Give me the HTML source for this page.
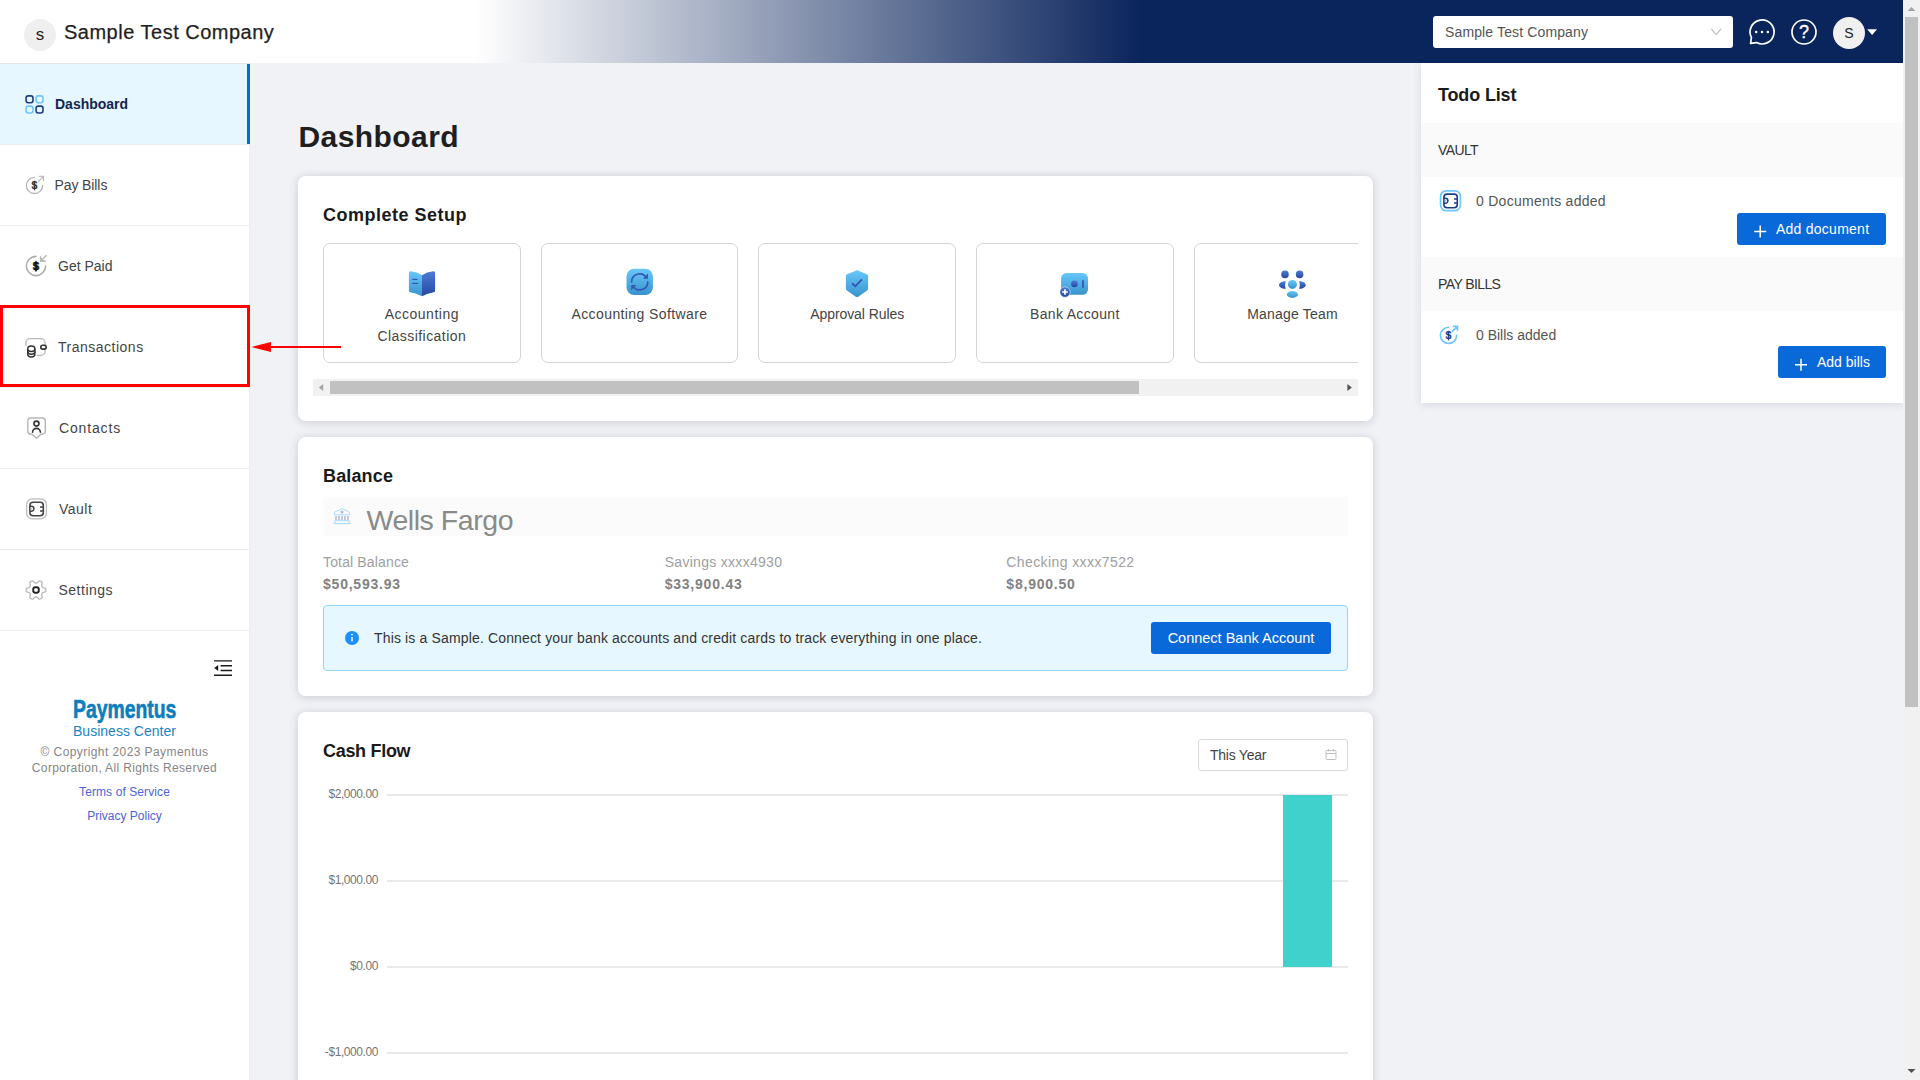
<!DOCTYPE html>
<html lang="en">
<head>
<meta charset="utf-8">
<title>Dashboard - Paymentus Business Center</title>
<style>
*{box-sizing:border-box;margin:0;padding:0}
html,body{width:1920px;height:1080px;overflow:hidden}
body{font-family:"Liberation Sans",sans-serif;font-size:14px;color:#333;background:#f1f2f6;position:relative}
.abs{position:absolute}
svg text{font-family:"Liberation Sans",sans-serif}
#ov{position:absolute;left:0;top:0;pointer-events:none}
/* header */
#hdr{position:absolute;left:0;top:0;width:1903px;height:63px;background:linear-gradient(90deg,#fff 0,#fff 25%,#0a245c 60%,#0a245c 100%)}
#hdr .av{position:absolute;left:24px;top:19px;width:32px;height:32px;border-radius:50%;background:#efefef;text-align:center;line-height:31px;font-size:17px;color:#222}
#hdr .co{position:absolute;left:64px;top:20px;-webkit-text-stroke:.25px #1f1f1f;font-size:20px;line-height:24px;color:#1f1f1f;letter-spacing:.5px;white-space:nowrap}
#sel{position:absolute;left:1433px;top:16px;width:300px;height:32px;background:#fff;border-radius:3px;font-size:14px;line-height:32px;padding-left:12px;color:#555;letter-spacing:.13px}
#av2{position:absolute;left:1833px;top:17px;width:32px;height:32px;border-radius:50%;background:#f0f0f0;text-align:center;line-height:32px;font-size:14px;color:#222}
/* sidebar */
#side{position:absolute;left:0;top:63px;width:250px;height:1017px;background:#fff;border-top:1px solid #e3e5ea;border-right:1px solid #eceef2}
.mi{position:absolute;left:0;width:249px;height:81px;border-bottom:1px solid #ececec}
.mi span{position:absolute;top:31px;line-height:18px;font-size:14px;color:#444;white-space:nowrap}
.mi.act{background:linear-gradient(#e6f7ff,#e6f7ff) 0 0/247px 80px no-repeat,linear-gradient(#0a69d9,#0a69d9) 247px 0/3px 80px no-repeat;width:250px}
.mi.act span{font-weight:700;color:#14254f}
.ft{position:absolute;left:0;width:249px;text-align:center;white-space:nowrap}
/* cards */
.card{position:absolute;left:298px;width:1075px;background:#fff;border-radius:8px;box-shadow:0 1px 10px rgba(20,30,60,.19)}
.h4{position:absolute;font-size:18px;font-weight:700;color:#1a1a1a;white-space:nowrap;line-height:22px;letter-spacing:.5px}
.tile{position:absolute;top:0;width:197.67px;height:120px;border:1px solid #d4d4d4;border-radius:7px;background:#fff;text-align:center;color:#444;font-size:14px;line-height:22px}
.tile .tx{position:absolute;left:0;right:0;top:59px;letter-spacing:.2px}
.btn{position:absolute;height:32px;background:#0a69d9;border-radius:3px;color:#fff;font-size:14px;line-height:32px;white-space:nowrap}
.lb{position:absolute;font-size:14px;line-height:22px;color:#a0a0a0;white-space:nowrap}
.vl{position:absolute;font-size:14px;line-height:22px;color:#828282;font-weight:700;white-space:nowrap;letter-spacing:.78px}
.yl{position:absolute;left:0;width:378px;text-align:right;font-size:12px;line-height:14px;color:#757575;letter-spacing:-.42px}
.gl{position:absolute;left:387px;width:961px;height:2px;background:#e9e9e9}
.sh{position:absolute;left:0;width:482px;height:54px;background:#fafafa;font-size:14px;line-height:54px;padding-left:17px;color:#333;letter-spacing:-.6px}
</style>
</head>
<body>

<!-- HEADER -->
<div id="hdr">
  <div class="av">s</div>
  <div class="co">Sample Test Company</div>
  <div id="sel">Sample Test Company</div>
  <div id="av2">S</div>
</div>

<!-- SIDEBAR -->
<div id="side">
  <div class="mi act" style="top:0"><span style="left:55px">Dashboard</span></div>
  <div class="mi" style="top:81px"><span style="left:54.5px;letter-spacing:-.1px">Pay Bills</span></div>
  <div class="mi" style="top:162px"><span style="left:58px">Get Paid</span></div>
  <div class="mi" style="top:243px"><span style="left:58px;letter-spacing:.5px">Transactions</span></div>
  <div class="mi" style="top:324px"><span style="left:59px;letter-spacing:.85px">Contacts</span></div>
  <div class="mi" style="top:405px"><span style="left:59px;letter-spacing:.5px">Vault</span></div>
  <div class="mi" style="top:486px"><span style="left:58.5px;letter-spacing:.5px">Settings</span></div>

  <div class="ft" style="top:630px;font-size:25px;line-height:30px;font-weight:700;color:#0d7ebd"><span style="-webkit-text-stroke:.6px #0d7ebd;display:inline-block;transform:scaleX(.775);transform-origin:50% 50%">Paymentus</span></div>
  <div class="ft" style="top:658px;font-size:14px;line-height:18px;color:#1a84c4;letter-spacing:.02px">Business Center</div>
  <div class="ft" style="top:680px;font-size:12px;line-height:16px;color:#858585;letter-spacing:.42px">© Copyright 2023 Paymentus</div>
  <div class="ft" style="top:696px;font-size:12px;line-height:16px;color:#858585;letter-spacing:.35px">Corporation, All Rights Reserved</div>
  <div class="ft" style="top:720px;font-size:12px;line-height:16px;color:#4b64d7;letter-spacing:.09px">Terms of Service</div>
  <div class="ft" style="top:744px;font-size:12px;line-height:16px;color:#4b64d7;letter-spacing:0">Privacy Policy</div>
</div>

<!-- MAIN -->
<div id="title" class="abs" style="left:298.5px;top:119px;font-size:30px;font-weight:700;line-height:36px;color:#1f1f1f;letter-spacing:.42px">Dashboard</div>

<div class="card" id="c1" style="top:176px;height:245px">
  <div class="h4" style="left:25px;top:28px">Complete Setup</div>
  <div class="abs" style="left:15px;top:67px;width:1045px;height:136px;overflow:hidden">
    <div class="tile" style="left:10px"><div class="tx"><span style="letter-spacing:.5px">Accounting</span><br><span style="letter-spacing:.45px">Classification</span></div></div>
    <div class="tile" style="left:227.67px"><div class="tx" style="letter-spacing:.4px">Accounting Software</div></div>
    <div class="tile" style="left:445.33px"><div class="tx" style="letter-spacing:-.08px">Approval Rules</div></div>
    <div class="tile" style="left:663px"><div class="tx" style="letter-spacing:.34px">Bank Account</div></div>
    <div class="tile" style="left:880.67px"><div class="tx">Manage Team</div></div>
  </div>
  <div class="abs" style="left:15px;top:203px;width:1045px;height:17px;background:#f1f1f1"></div>
  <div class="abs" style="left:32px;top:205px;width:809px;height:13px;background:#c1c1c1"></div>
</div>

<div class="card" id="c2" style="top:437px;height:259px">
  <div class="h4" style="left:25px;top:28px;letter-spacing:.15px">Balance</div>
  <div class="abs" style="left:25px;top:60px;width:1025px;height:39px;background:#fbfbfb"></div>
  <div class="abs" style="left:68.5px;top:65px;font-size:28.5px;line-height:36px;color:#8a8a8a;white-space:nowrap;letter-spacing:-.45px">Wells Fargo</div>
  <div class="lb" style="left:25px;top:114px;letter-spacing:.15px">Total Balance</div>
  <div class="vl" style="left:25px;top:136px">$50,593.93</div>
  <div class="lb" style="left:366.67px;top:114px;letter-spacing:.3px">Savings xxxx4930</div>
  <div class="vl" style="left:366.67px;top:136px">$33,900.43</div>
  <div class="lb" style="left:708.33px;top:114px;letter-spacing:.4px">Checking xxxx7522</div>
  <div class="vl" style="left:708.33px;top:136px">$8,900.50</div>
  <div class="abs" style="left:25px;top:168px;width:1025px;height:66px;background:#e6f7ff;border:1px solid #91d5ff;border-radius:4px">
    <div class="abs" style="left:50px;top:21px;line-height:22px;font-size:14px;color:#333;white-space:nowrap;letter-spacing:.15px">This is a Sample. Connect your bank accounts and credit cards to track everything in one place.</div>
    <div class="btn" style="left:827px;top:16px;width:180px;text-align:center;font-size:14.5px">Connect Bank Account</div>
  </div>
</div>

<div class="card" id="c3" style="top:712px;height:400px">
  <div class="h4" style="left:25px;top:28px;letter-spacing:-.3px">Cash Flow</div>
  <div class="abs" style="left:900px;top:27px;width:150px;height:32px;border:1px solid #d9d9d9;border-radius:3px;line-height:30px;padding-left:11px;font-size:14px;color:#444;letter-spacing:-.25px">This Year</div>
</div>
<!-- chart (page coords) -->
<div class="yl" style="top:787px">$2,000.00</div>
<div class="yl" style="top:873px">$1,000.00</div>
<div class="yl" style="top:959px">$0.00</div>
<div class="yl" style="top:1045px">-$1,000.00</div>
<div class="gl" style="top:794px"></div>
<div class="gl" style="top:880px"></div>
<div class="gl" style="top:966px"></div>
<div class="gl" style="top:1052px"></div>
<div class="abs" style="left:1283.3px;top:795px;width:48.4px;height:172px;background:#40d1cd"></div>

<!-- TODO -->
<div id="todo" class="abs" style="left:1421px;top:63px;width:482px;height:340px;background:#fff;box-shadow:0 2px 8px rgba(40,50,90,.12)">
  <div class="h4" style="left:17px;top:21px;letter-spacing:-.15px">Todo List</div>
  <div class="sh" style="top:60px">VAULT</div>
  <div class="abs" style="left:55px;top:127px;line-height:22px;color:#555;white-space:nowrap;letter-spacing:.27px">0 Documents added</div>
  <div class="btn" style="left:316px;top:150px;width:149px;padding-left:39px;letter-spacing:.25px">Add document</div>
  <div class="sh" style="top:194px">PAY BILLS</div>
  <div class="abs" style="left:55px;top:261px;line-height:22px;color:#555;white-space:nowrap">0 Bills added</div>
  <div class="btn" style="left:357px;top:283px;width:108px;padding-left:39px">Add bills</div>
</div>

<!-- red highlight -->
<div class="abs" style="left:0;top:305px;width:250px;height:82px;border:3px solid #ff0000"></div>

<!-- page scrollbar -->
<div class="abs" style="left:1903px;top:0;width:17px;height:1080px;background:#f1f1f1"></div>
<div class="abs" style="left:1905px;top:17px;width:13px;height:690px;background:#c1c1c1"></div>

<!-- ICON OVERLAY (page coordinates) -->
<svg id="ov" width="1920" height="1080" viewBox="0 0 1920 1080">
<defs>
<linearGradient id="lb" x1="0" y1="0" x2="0" y2="1"><stop offset="0" stop-color="#67c8fc"/><stop offset="1" stop-color="#3793cb"/></linearGradient>
<linearGradient id="db" x1="0" y1="0" x2="0" y2="1"><stop offset="0" stop-color="#4d7bd6"/><stop offset="1" stop-color="#27489f"/></linearGradient>
</defs>

<!-- header icons -->
<path d="M1711.3 28.8L1716.2 34.6L1721 28.8" fill="none" stroke="#bfbfbf" stroke-width="1.2"/>
<g fill="none" stroke="#fff" stroke-width="1.7">
<path d="M1756.6 42.6A12 12 0 1 0 1751.4 37.4L1750.6 43.4Z" stroke-linejoin="round"/>
<circle cx="1804" cy="32" r="12"/>
</g>
<g fill="#fff"><circle cx="1756.2" cy="32" r="1.25"/><circle cx="1762" cy="32" r="1.25"/><circle cx="1767.8" cy="32" r="1.25"/>
<path d="M1867.2 29.3H1877L1872.1 34.9Z"/></g>
<text x="1804" y="38.4" text-anchor="middle" font-size="18" fill="#fff" stroke="#fff" stroke-width=".35">?</text>

<!-- sidebar icons -->
<g fill="none" stroke-width="1.6">
<rect x="26.1" y="95.9" width="6.9" height="6.9" rx="2.2" stroke="#1d3c86"/>
<rect x="36.1" y="95.9" width="6.9" height="6.9" rx="2.2" stroke="#6ec6ff"/>
<rect x="26.1" y="106.1" width="6.9" height="6.9" rx="2.2" stroke="#6ec6ff"/>
<rect x="36.1" y="106.1" width="6.9" height="6.9" rx="2.2" stroke="#1d3c86"/>
</g>
<g fill="none" stroke-linecap="round">
<path d="M34.5 177.3 A8.1 8.1 0 1 0 42.6 185.4" stroke="#b3b3b3" stroke-width="1.3"/>
<path d="M38.3 181.4 L43.3 176.6 M39.3 176.4 H43.5 V180.5" stroke="#bdbdbd" stroke-width="1.3"/>
</g>
<text x="34.5" y="189.20000000000002" text-anchor="middle" font-size="10.5" font-weight="700" fill="#333" stroke="#333" stroke-width=".2">$</text>
<path d="M34.5 180.8V190.3" stroke="#333" stroke-width=".9"/>
<!-- get paid -->
<g fill="none" stroke-linecap="round">
<path d="M36 256.4A9.6 9.6 0 1 0 45.6 266" stroke="#adadad" stroke-width="1.6"/>
<path d="M46.2 255.6L40.8 261M40.5 256.6V261.3H45.4" stroke="#b8b8b8" stroke-width="1.4"/>
</g>
<text x="36" y="270" text-anchor="middle" font-size="11.5" font-weight="700" fill="#111" stroke="#111" stroke-width=".5">$</text>
<path d="M36 260.8V271.4" stroke="#111" stroke-width="1.2"/>
<path d="M40.5 257V261.3H44.8Z" fill="#b8b8b8"/>
<!-- transactions -->
<g fill="none">
<path d="M26 345.3V342.7a4 4 0 0 1 4-4H41.1a4 4 0 0 1 4 4V351.3a4 4 0 0 1-4 4H37.3" stroke="#b8b8b8" stroke-width="1.3" stroke-linecap="round"/>
<rect x="40.8" y="345.2" width="5.4" height="3.9" rx="1.95" stroke="#333" stroke-width="1.6" fill="#fff"/>
<g stroke="#333" stroke-width="1.5">
<path d="M27.75 348.8V354.2a3.55 2.7 0 0 0 7.1 0V348.8" fill="#fff"/>
<ellipse cx="31.3" cy="348.8" rx="3.55" ry="2.7" fill="#fff"/>
<path d="M27.75 351.6a3.55 2.7 0 0 0 7.1 0"/>
</g></g>
<!-- contacts -->
<path d="M30.8 418H42.3a3 3 0 0 1 3 3V431.2a3 3 0 0 1-3 3H41L36.5 438.2L32 434.2H30.8a3 3 0 0 1-3-3V421a3 3 0 0 1 3-3z" fill="none" stroke="#b5b5b5" stroke-width="1.4" stroke-linejoin="round"/>
<g fill="none" stroke="#333" stroke-width="1.6" stroke-linecap="round"><circle cx="36.45" cy="423.6" r="2.5"/><path d="M32.55 432.3a3.9 3.9 0 0 1 7.8 0"/></g>
<g transform="translate(0 0)" fill="none">
<rect x="26.6" y="498.9" width="19.8" height="19.9" rx="5.6" stroke="#bdbdbd" stroke-width="1.3"/>
<rect x="29.9" y="502.2" width="13.4" height="13.6" rx="3.2" stroke="#444" stroke-width="1.6"/>
<path d="M29.9 506.3h1.5a2.5 2.5 0 0 1 0 5h-1.5M40 507h3.2M40 511h3.2" stroke="#444" stroke-width="1.5"/>
<circle cx="31.4" cy="508.8" r="0.9" fill="#ccc" stroke="none"/>
</g>
<!-- settings -->
<path d="M46.0 590.0 L45.9 590.6 L45.8 591.3 L45.3 591.9 L44.2 592.2 L43.1 592.4 L42.6 592.7 L42.3 593.1 L42.1 593.5 L41.9 593.9 L41.7 594.3 L41.6 594.9 L42.0 596.0 L42.3 597.2 L42.0 597.8 L41.5 598.3 L41.0 598.6 L40.4 598.9 L39.8 599.1 L39.1 599.0 L38.2 598.2 L37.5 597.3 L36.9 597.1 L36.5 597.0 L36.0 597.0 L35.5 597.0 L35.1 597.1 L34.5 597.3 L33.8 598.2 L32.9 599.0 L32.2 599.1 L31.6 598.9 L31.0 598.6 L30.5 598.3 L30.0 597.8 L29.7 597.2 L30.0 596.0 L30.4 594.9 L30.3 594.3 L30.1 593.9 L29.9 593.5 L29.7 593.1 L29.4 592.7 L28.9 592.4 L27.8 592.2 L26.7 591.9 L26.2 591.3 L26.1 590.6 L26.1 590.0 L26.1 589.4 L26.2 588.7 L26.7 588.1 L27.8 587.8 L28.9 587.6 L29.4 587.3 L29.7 586.9 L29.9 586.5 L30.1 586.1 L30.3 585.7 L30.4 585.1 L30.0 584.0 L29.7 582.8 L30.0 582.2 L30.5 581.7 L31.0 581.4 L31.6 581.1 L32.2 580.9 L32.9 581.0 L33.8 581.8 L34.5 582.7 L35.1 582.9 L35.5 583.0 L36.0 583.0 L36.5 583.0 L36.9 582.9 L37.5 582.7 L38.2 581.8 L39.1 581.0 L39.8 580.9 L40.4 581.1 L41.0 581.4 L41.5 581.7 L42.0 582.2 L42.3 582.8 L42.0 584.0 L41.6 585.1 L41.7 585.7 L41.9 586.1 L42.1 586.5 L42.3 586.9 L42.6 587.3 L43.1 587.6 L44.2 587.8 L45.3 588.1 L45.8 588.7 L45.9 589.4Z" fill="none" stroke="#b8b8b8" stroke-width="1.3" stroke-linejoin="round"/>
<rect x="33.2" y="587.2" width="5.6" height="5.6" rx="2.2" fill="none" stroke="#222" stroke-width="1.9"/>
<!-- collapse -->
<path d="M214 660.9H232M220.6 665.7H232M220.6 670.5H232M214 675.3H232" stroke="#1a1a1a" stroke-width="1.4" fill="none"/>
<path d="M214.2 668.1L218.2 665.1V671Z" fill="#1a1a1a"/>

<!-- red arrow -->
<path d="M270 347H341" stroke="#ff0000" stroke-width="2.2"/>
<path d="M251.5 347L271 341.9V352.1Z" fill="#ff0000"/>

<!-- tile scrollbar arrows -->
<path d="M318.8 387.5L323.2 384V391Z" fill="#a3a3a3"/>
<path d="M1351.8 387.5L1347.4 384V391Z" fill="#505050"/>
<!-- page scrollbar arrows -->
<path d="M1907.5 11L1911.5 7L1915.5 11Z" fill="#a3a3a3"/>
<path d="M1907.5 1069L1911.5 1073L1915.5 1069Z" fill="#505050"/>

<!-- tile icons -->
<!-- book -->
<path d="M408.9 273a1.7 1.7 0 0 1 1.9-1.7Q417.5 272 422 275.3V296.3Q416.5 293.2 410 292.2a1.6 1.6 0 0 1-1.1-1.5z" fill="url(#lb)"/>
<path d="M435.1 273a1.7 1.7 0 0 0-1.9-1.7Q426.5 272 422 275.3V296.3Q427.5 293.2 434 292.2a1.6 1.6 0 0 0 1.1-1.5z" fill="url(#db)"/>
<path d="M412.8 279.4H416.8M412.8 283.4H417.6" stroke="#3558b5" stroke-width="1.3" stroke-linecap="round"/>
<!-- sync -->
<rect x="626.5" y="268.8" width="26.4" height="26.2" rx="7.5" fill="url(#lb)"/>
<g fill="none" stroke="#3558b5" stroke-width="1.7" stroke-linecap="round">
<path d="M631.6 281.9a8 8 0 0 1 14.6-4.5"/>
<path d="M647.8 281.9a8 8 0 0 1-14.6 4.5"/>
</g>
<path d="M648 273.6V278.8H642.8Z M631.2 290.2V285H636.4Z" fill="#3558b5"/>
<!-- shield -->
<path d="M857 270.2L867 274.3a1.8 1.8 0 0 1 1.1 1.7V288.5a2.5 2.5 0 0 1-1 2L858.2 296.8a2 2 0 0 1-2.4 0L846.9 290.5a2.5 2.5 0 0 1-1-2V276a1.8 1.8 0 0 1 1.1-1.7z" fill="url(#lb)"/>
<path d="M852.6 283.8L855.2 286.3L861.4 279.9" fill="none" stroke="#3558b5" stroke-width="1.9" stroke-linecap="round" stroke-linejoin="round"/>
<!-- bank account -->
<rect x="1061.1" y="273" width="26.9" height="21.8" rx="5.5" fill="url(#lb)"/>
<circle cx="1074.4" cy="283.9" r="3.3" fill="url(#db)"/>
<path d="M1083 280.9V287.2" stroke="#3a5ebb" stroke-width="2" stroke-linecap="round"/>
<circle cx="1065" cy="292" r="5.2" fill="url(#db)" stroke="#fff" stroke-width=".5"/>
<path d="M1062.2 292H1067.8M1065 289.2V294.8" stroke="#fff" stroke-width="1.7"/>
<!-- team -->
<circle cx="1285" cy="274.4" r="3.8" fill="url(#db)"/>
<circle cx="1299.6" cy="274.4" r="3.8" fill="url(#db)"/>
<circle cx="1292.4" cy="284.4" r="4.5" fill="url(#lb)"/>
<ellipse cx="1292.4" cy="294.4" rx="5.6" ry="3.5" fill="url(#lb)"/>
<path d="M1285.8 281.2C1281.5 281 1279 283.5 1279 285C1279 286.8 1281.5 289 1285.8 288.8C1284.8 286.3 1284.8 283.7 1285.8 281.2Z" fill="url(#db)"/>
<path d="M1299 281.2C1303.3 281 1305.8 283.5 1305.8 285C1305.8 286.8 1303.3 289 1299 288.8C1300 286.3 1300 283.7 1299 281.2Z" fill="url(#db)"/>

<!-- bank icon -->
<g fill="none" stroke="#a5dcff" stroke-width="1">
<path d="M334.5 514.8V512.2L342 508.5L349.5 512.2V514.8Z" stroke-linejoin="round"/>
<path d="M334.8 520.8H349.2V523.6H334.8Z M333.5 523.6H350.5"/>
</g>
<path d="M336 516V520.3M339 516V520.3M342 516V520.3M345 516V520.3M348 516V520.3" stroke="#a8adc9" stroke-width="1.3"/>
<circle cx="342" cy="512" r="1.1" fill="none" stroke="#8f97bd" stroke-width=".8"/>

<!-- alert info icon -->
<circle cx="352" cy="638" r="7" fill="#1890ff"/>
<path d="M352 637V641.6" stroke="#fff" stroke-width="1.4"/><circle cx="352" cy="634.6" r=".9" fill="#fff"/>

<!-- calendar icon -->
<g fill="none" stroke="#bfbfbf" stroke-width="1"><rect x="1326" y="750.5" width="10" height="9" rx="1"/><path d="M1326 753.5H1336M1328.5 749V751.5M1333.5 749V751.5"/></g>

<!-- todo icons -->
<g transform="translate(1414 -308.1)" fill="none">
<rect x="26.6" y="498.9" width="19.8" height="19.9" rx="5.6" stroke="#6cc6ff" stroke-width="1.7"/>
<rect x="29.9" y="502.2" width="13.4" height="13.6" rx="3.2" stroke="#1b3d8a" stroke-width="1.6"/>
<path d="M29.9 506.3h1.5a2.5 2.5 0 0 1 0 5h-1.5M40 507h3.2M40 511h3.2" stroke="#1b3d8a" stroke-width="1.5"/>
<circle cx="31.4" cy="508.8" r="0.9" fill="#6cc6ff" stroke="none"/>
</g><g fill="none" stroke-linecap="round">
<path d="M1448.5 327.29999999999995 A8.1 8.1 0 1 0 1456.6 335.4" stroke="#6cc6ff" stroke-width="1.6"/>
<path d="M1452.3 331.4 L1457.3 326.59999999999997 M1453.3 326.4 H1457.5 V330.5" stroke="#6cc6ff" stroke-width="1.6"/>
</g>
<text x="1448.5" y="339.2" text-anchor="middle" font-size="10.5" font-weight="700" fill="#1b3d8a" stroke="#1b3d8a" stroke-width=".2">$</text>
<path d="M1448.5 330.79999999999995V340.29999999999995" stroke="#1b3d8a" stroke-width=".9"/>
<!-- plus icons on buttons -->
<path d="M1754.2 231.5H1766.2M1760.2 225.5V237.5M1795 364.7H1807M1801 358.7V370.7" stroke="#fff" stroke-width="1.5"/>
</svg>

</body>
</html>
